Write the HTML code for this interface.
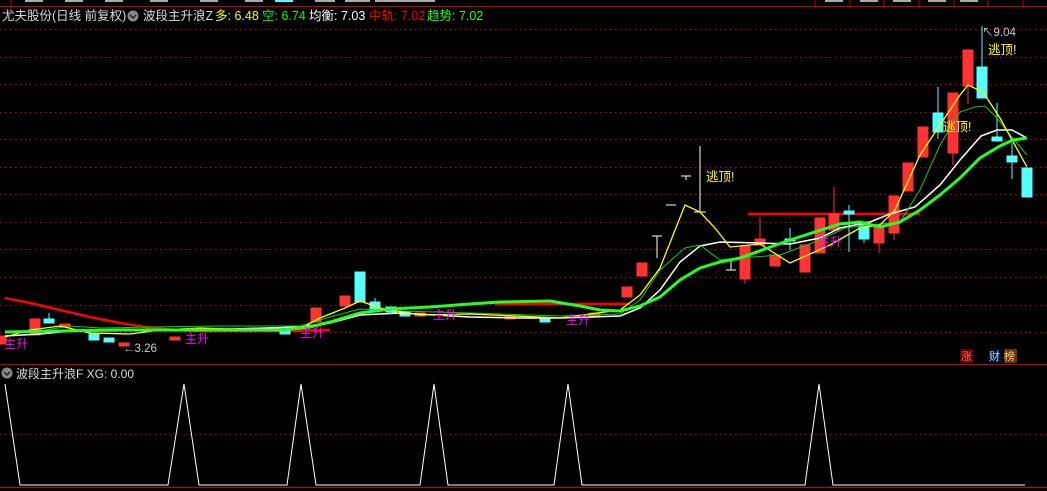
<!DOCTYPE html>
<html><head><meta charset="utf-8"><style>
body{margin:0;background:#000;width:1047px;height:491px;overflow:hidden;font-family:"Liberation Sans","Noto Sans CJK SC",sans-serif}
svg{position:absolute;left:0;top:0}
text{font-family:"Liberation Sans","Noto Sans CJK SC",sans-serif}
</style></head><body>
<svg width="1047" height="491" viewBox="0 0 1047 491">
<line x1="0" y1="6.5" x2="1047" y2="6.5" stroke="#c00" stroke-width="1"/>
<g stroke="#c00"><line x1="11" y1="0" x2="11" y2="6"/><line x1="815" y1="0" x2="815" y2="6"/><line x1="850" y1="0" x2="850" y2="6"/><line x1="884" y1="0" x2="884" y2="6"/><line x1="919" y1="0" x2="919" y2="6"/><line x1="954" y1="0" x2="954" y2="6"/><line x1="988" y1="0" x2="988" y2="6"/><line x1="1023" y1="0" x2="1023" y2="6"/></g>
<g fill="#aaa"><rect x="25" y="0" width="18" height="2"/><rect x="65" y="0" width="18" height="2"/><rect x="105" y="0" width="18" height="2"/><rect x="150" y="0" width="18" height="2"/><rect x="200" y="0" width="18" height="2"/><rect x="245" y="0" width="18" height="2"/><rect x="315" y="0" width="20" height="2"/><rect x="345" y="0" width="25" height="2"/><rect x="375" y="0" width="60" height="2"/><rect x="825" y="0" width="18" height="2"/><rect x="860" y="0" width="18" height="2"/><rect x="893" y="0" width="18" height="2"/><rect x="928" y="0" width="18" height="2"/><rect x="960" y="0" width="18" height="2"/></g>
<rect x="275" y="0" width="18" height="2" fill="#5ff"/>
<g stroke="#c00" stroke-dasharray="1.5 3.5" stroke-width="1">
<line x1="0" y1="29.5" x2="1047" y2="29.5"/><line x1="0" y1="57.5" x2="1047" y2="57.5"/><line x1="0" y1="84.5" x2="1047" y2="84.5"/><line x1="0" y1="112.5" x2="1047" y2="112.5"/><line x1="0" y1="139.5" x2="1047" y2="139.5"/><line x1="0" y1="167.5" x2="1047" y2="167.5"/><line x1="0" y1="194.5" x2="1047" y2="194.5"/><line x1="0" y1="222.5" x2="1047" y2="222.5"/><line x1="0" y1="249.5" x2="1047" y2="249.5"/><line x1="0" y1="277.5" x2="1047" y2="277.5"/><line x1="0" y1="305.5" x2="1047" y2="305.5"/><line x1="0" y1="332.5" x2="1047" y2="332.5"/>
<line x1="0" y1="434.5" x2="1047" y2="434.5"/>
</g>
<line x1="0" y1="364.5" x2="1047" y2="364.5" stroke="#c00"/>
<line x1="0" y1="487.5" x2="1047" y2="487.5" stroke="#c00"/>
<text x="2" y="20" font-size="12.5" fill="#ddd">尤夫股份(日线 前复权)</text>
<circle cx="133" cy="16" r="5.5" fill="#888"/><path d="M130 15l3 3 3-3" stroke="#222" stroke-width="1.5" fill="none"/>
<text x="143" y="20" font-size="12.5" fill="#ddd">波段主升浪Z</text>
<text x="215" y="20" font-size="12.5" fill="#ff0">多: 6.48</text>
<text x="262" y="20" font-size="12.5" fill="#0f0">空: 6.74</text>
<text x="309" y="20" font-size="12.5" fill="#fff">均衡: 7.03</text>
<text x="369" y="20" font-size="12.5" fill="#f00">中轨: 7.02</text>
<text x="427" y="20" font-size="12.5" fill="#2f2">趋势: 7.02</text>
<polyline fill="none" stroke="#f00" stroke-width="2.5" points="5,298 30,303 60,310 90,317 120,323 145,327 175,330 200,331 290,331 330,330"/>
<polyline fill="none" stroke="#f00" stroke-width="2.5" points="495,304 630,304"/>
<polyline fill="none" stroke="#f00" stroke-width="2.5" points="748,214 920,214"/>
<g fill="#f33" stroke="#f33">
<rect x="0" y="336" width="6" height="8"/><rect x="30" y="319" width="10" height="16"/><rect x="60" y="324" width="10" height="3"/><rect x="119" y="343" width="10" height="3"/><rect x="170" y="337" width="10" height="3"/>
<rect x="311" y="308" width="10" height="14"/><rect x="340" y="296" width="10" height="10"/><rect x="415" y="313" width="10" height="3"/><rect x="505" y="316" width="10" height="3"/><rect x="590" y="313" width="10" height="4"/>
<rect x="622" y="287" width="10" height="10"/><rect x="637" y="263" width="10" height="13"/>
<rect x="740" y="246" width="10" height="33"/><line x1="745" y1="279" x2="745" y2="284"/>
<rect x="755" y="239" width="10" height="6"/><line x1="760" y1="217" x2="760" y2="239"/>
<rect x="770" y="255" width="10" height="11"/><rect x="800" y="245" width="10" height="27"/>
<rect x="815" y="218" width="10" height="35"/>
<rect x="829" y="214" width="10" height="16"/><line x1="834" y1="187" x2="834" y2="214"/>
<rect x="874" y="226" width="10" height="17"/><line x1="879" y1="243" x2="879" y2="253"/>
<rect x="889" y="196" width="10" height="37"/><line x1="894" y1="233" x2="894" y2="240"/>
<rect x="903" y="163" width="10" height="28"/>
<rect x="918" y="127" width="10" height="30"/>
<rect x="948" y="93" width="10" height="60"/><line x1="953" y1="153" x2="953" y2="165"/>
<rect x="963" y="50" width="10" height="36"/><line x1="968" y1="86" x2="968" y2="104"/>
</g>
<g fill="#5ff" stroke="#5ff">
<rect x="44" y="319" width="10" height="4"/><line x1="49" y1="313" x2="49" y2="319"/>
<rect x="89" y="334" width="10" height="6"/><rect x="104" y="338" width="10" height="4"/><rect x="280" y="329" width="10" height="5"/>
<rect x="355" y="272" width="10" height="30"/><rect x="370" y="302" width="10" height="7"/><line x1="375" y1="298" x2="375" y2="302"/>
<rect x="386" y="307" width="10" height="5"/><rect x="400" y="312" width="10" height="4"/><rect x="540" y="318" width="10" height="4"/>
<line x1="790" y1="228" x2="790" y2="250"/><rect x="785" y="239" width="10" height="2"/>
<rect x="844" y="211" width="10" height="3"/><line x1="849" y1="205" x2="849" y2="252"/>
<rect x="859" y="222" width="10" height="17"/><line x1="864" y1="239" x2="864" y2="243"/>
<rect x="933" y="113" width="10" height="19"/><line x1="938" y1="87" x2="938" y2="139"/>
<rect x="977" y="67" width="10" height="31"/><line x1="982" y1="26" x2="982" y2="67"/>
<rect x="992" y="137" width="10" height="4"/><line x1="997" y1="103" x2="997" y2="137"/>
<rect x="1007" y="156" width="10" height="6"/><line x1="1012" y1="143" x2="1012" y2="179"/>
<rect x="1022" y="168" width="10" height="29"/>
</g>
<g stroke="#fff" fill="none">
<path d="M652 236h10M657 236v22"/><path d="M666 205h10"/><path d="M681 176h10M686 176v4"/><path d="M700 146v66M694 212h12"/><path d="M726 270h10M731 270v-10"/>
</g>
<polyline fill="none" stroke="#fff" stroke-width="1.5" points="5,336 40,334 80,330 150,330 230,329 300,327 330,323 360,315 400,313 470,317 520,318 560,318 620,316 640,308 660,290 680,262 700,246 720,242 760,243 790,244 820,238 840,228 870,222 890,214 915,207 940,185 960,160 981,136 997,130 1012,130 1027,138"/>
<polyline fill="none" stroke="#1c1" stroke-width="1" points="5,333 40,331 70,326 100,328 150,327 220,326 300,326 330,317 360,309 400,311 470,313 560,316 620,314 640,300 660,270 685,248 700,245 720,260 740,258 780,255 820,240 845,228 870,225 900,222 920,190 940,145 960,112 975,107 985,106 997,118 1010,135 1027,155"/>
<polyline fill="none" stroke="#ff0" stroke-width="1.3" points="5,337 30,330 60,326 90,333 130,334 160,330 200,328 260,330 300,329 320,318 345,308 360,301 380,308 420,315 470,314 560,318 620,310 640,295 660,268 685,205 700,212 715,228 730,247 760,244 790,263 830,245 860,228 880,225 895,210 920,155 940,125 960,95 968,85 983,92 1000,118 1027,167"/>
<polyline fill="none" stroke="#2f2" stroke-width="3" points="5,332 60,331 120,330 200,330 280,330 310,327 330,322 360,313 390,309 430,307 470,304 500,302 550,301 580,306 600,310 620,311 640,306 660,297 680,280 700,268 720,262 740,258 790,240 840,224 860,222 880,227 900,222 920,210 940,195 960,178 980,158 1000,146 1013,140 1027,138"/>
<g fill="#f0f" font-size="12"><text x="4" y="348">主升</text><text x="185" y="343">主升</text><text x="300" y="337">主升</text><text x="433" y="319">主升</text><text x="566" y="324">主升</text><text x="818" y="246">主升</text></g>
<text x="123" y="352" font-size="11.5" fill="#ccc">←3.26</text>
<g fill="#ff0" font-size="12.5"><text x="706" y="181">逃顶!</text><text x="988" y="54">逃顶!</text><text x="943" y="131">逃顶!</text></g>
<text x="982" y="36" font-size="11.5" fill="#ccc">↖9.04</text>
<rect x="960" y="349" width="13" height="14" fill="#600"/><text x="961" y="360" font-size="11" fill="#f66">涨</text>
<rect x="989" y="349" width="13" height="14" fill="#013"/><text x="989" y="360" font-size="11" fill="#adf">财</text>
<rect x="1004" y="349" width="13" height="14" fill="#630"/><text x="1004" y="360" font-size="11" fill="#fc8">榜</text>
<circle cx="7" cy="373" r="5.5" fill="#888"/><path d="M4 372l3 3 3-3" stroke="#222" stroke-width="1.5" fill="none"/>
<text x="16" y="378" font-size="12" fill="#ddd">波段主升浪F XG: 0.00</text>
<polyline fill="none" stroke="#fff" stroke-width="1" points="5,384 20,485 168,485 184,384 199,485 287,485 301,384 316,485 420,485 434,384 448,485 554,485 568,384 582,485 805,485 819,384 833,485 1025,485"/>
</svg>
</body></html>
